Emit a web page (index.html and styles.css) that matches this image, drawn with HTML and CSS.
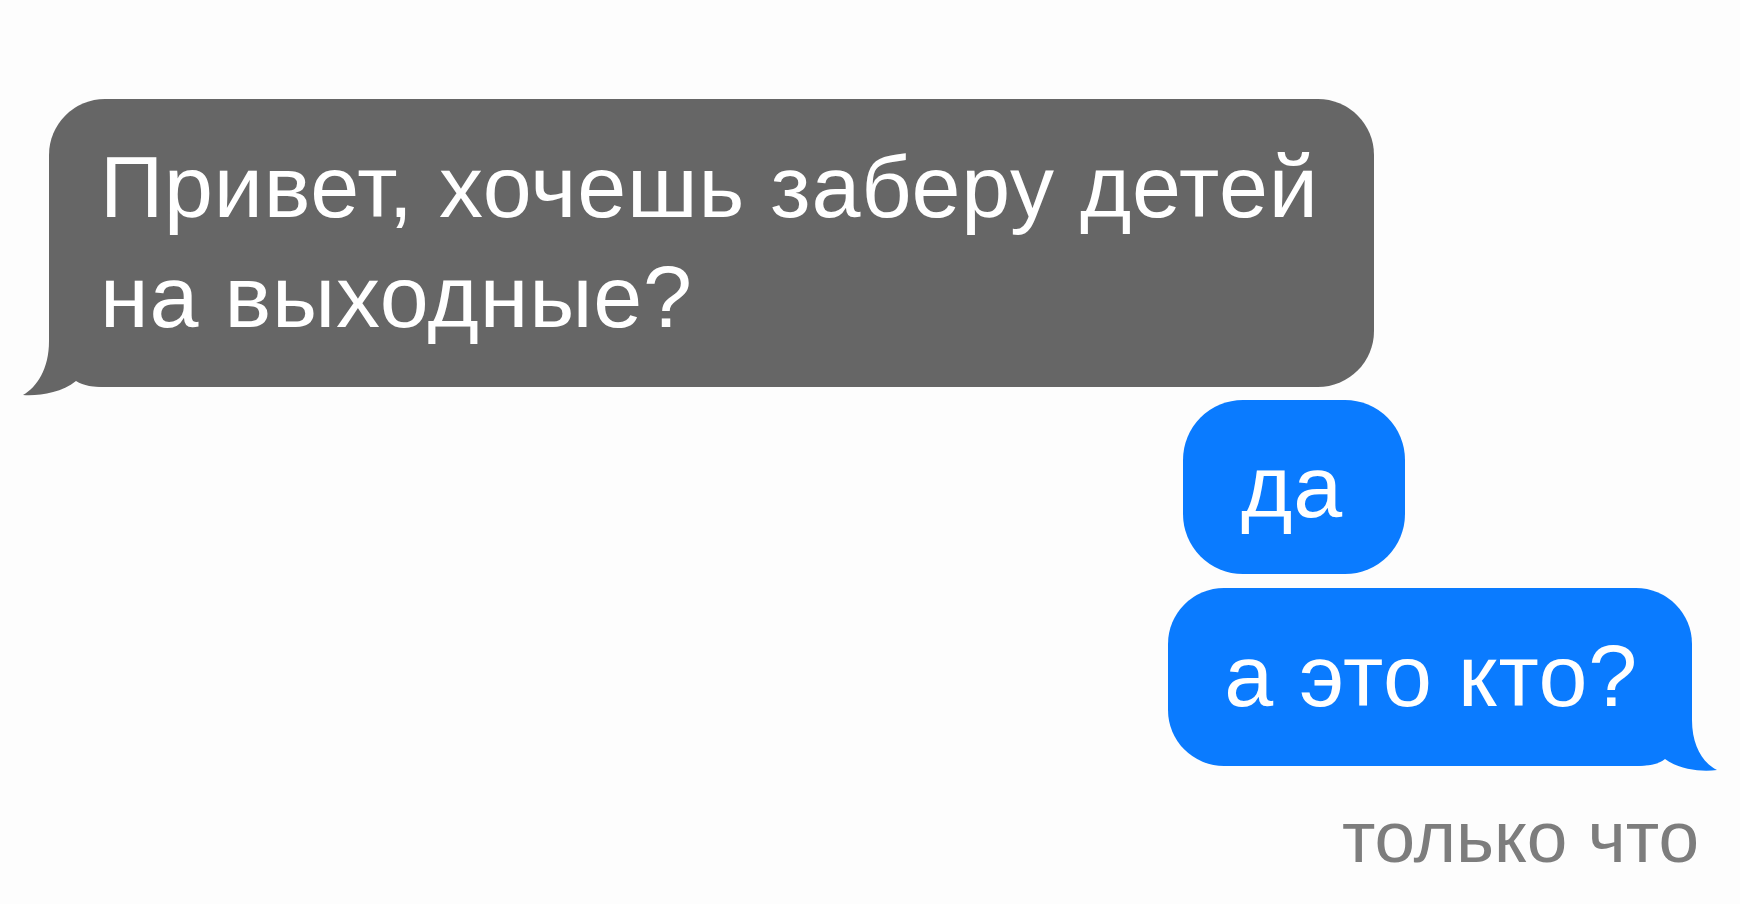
FILE: index.html
```html
<!DOCTYPE html>
<html lang="ru">
<head>
    <meta charset="UTF-8">
    <meta name="viewport" content="width=device-width, initial-scale=1.0">
    <title>Сообщения</title>
    <link rel="stylesheet" href="styles.css">
</head>
<body>
    <main class="thread">
        <!-- Incoming -->
        <div class="bubble bubble-in">
            Привет, хочешь заберу детей на выходные?
            <svg class="tail tail-left" viewBox="-30 -60 90 70" width="90" height="70">
                <path d="M0,-60 L0,-46 C0,-18 -12,0 -26,8 C-10,9 12,6 27,-6 C35,-1 43,0 60,0 L60,-60 Z"/>
            </svg>
        </div>

        <!-- Outgoing -->
        <div class="bubble bubble-out bubble-short">да</div>
        <div class="bubble bubble-out bubble-last">
            а это кто?
            <svg class="tail tail-right" viewBox="-60 -60 90 70" width="90" height="70">
                <path d="M0,-60 L0,-46 C0,-20 11,-3 25,4 C10,6 -12,4 -27,-7 C-35,-1 -43,0 -60,0 L-60,-60 Z"/>
            </svg>
        </div>

        <div class="stamp">только что</div>
    </main>
</body>
</html>
```

FILE: styles.css
```css
/* Global */
body {
    margin: 0;
    background: #fdfdfd;
    font-family: 'Liberation Sans', Arial, sans-serif;
    -webkit-font-smoothing: antialiased;
}

.thread {
    display: flex;
    flex-direction: column;
    align-items: flex-start;
    padding-top: 99px;
}

/* Bubbles */
.bubble {
    position: relative;
    box-sizing: border-box;
    font-size: 88px;
    line-height: 110px;
    letter-spacing: 0.8px;
    color: #ffffff;
    border-radius: 56px;
}

.bubble-in {
    width: 1325px;
    margin-left: 49px;
    padding: 33px 20px 35px 51px;
    background: #666666;
}

.bubble-out {
    align-self: flex-end;
    background: #0a7bff;
}

.bubble-short {
    margin-top: 13px;
    margin-right: 335px;
    padding: 32px 62px 32px 58px;
    border-radius: 60px;
}

.bubble-last {
    margin-top: 14px;
    margin-right: 48px;
    padding: 33px 54px 35px 56px;
}

/* Tails */
.tail {
    position: absolute;
    bottom: -10px;
}

.tail-left {
    left: -30px;
    fill: #666666;
}

.tail-right {
    right: -30px;
    fill: #0a7bff;
}

/* Timestamp */
.stamp {
    align-self: flex-end;
    margin-top: 33px;
    margin-right: 41px;
    font-size: 73px;
    line-height: 76px;
    color: #7d7d7d;
}
```
